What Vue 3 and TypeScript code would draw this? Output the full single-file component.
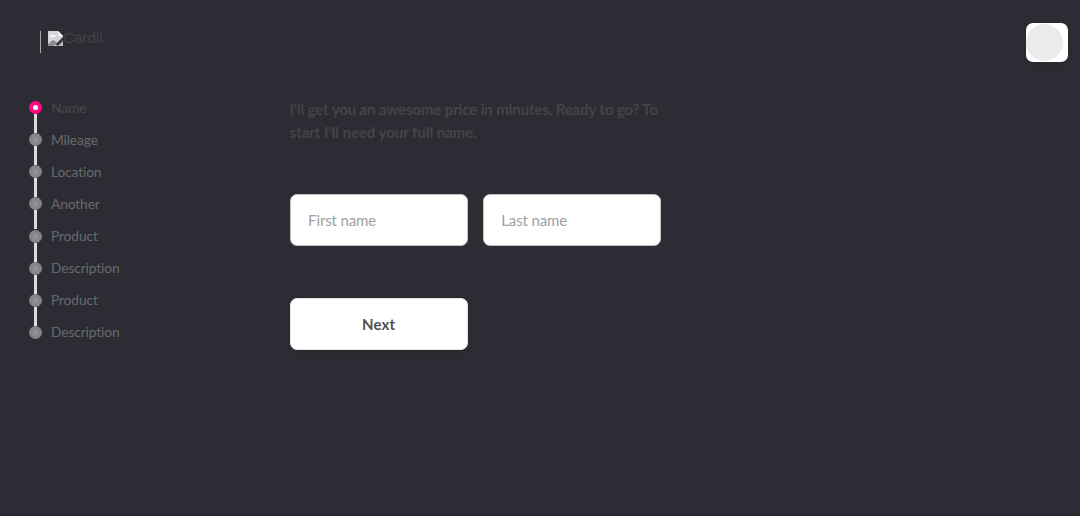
<script setup lang="ts">
import { ref } from 'vue'

const steps: string[] = ['Name', 'Mileage', 'Location', 'Another', 'Product', 'Description', 'Product', 'Description']
const current = ref(0)
const firstName = ref('')
const lastName = ref('')

function next(): void {
  if (current.value < steps.length - 1) current.value++
}
</script>

<template>
  <div class="page">
    <header class="header">
      <div class="brand">
        <span class="divider"></span>
        <svg class="broken" width="15" height="15" viewBox="0 0 15 15">
          <path d="M0 0H10L15 5V9L9 15H0Z" fill="#d5d6d9" />
          <path d="M10 0V5H15Z" fill="#f7f7f7" />
          <path d="M2 5Q3 3 5 4Q7 3 8 6H2Z" fill="#f6f7fa" />
          <path d="M0 13L5 9L9 11L6 15H0Z" fill="#8b8c8d" />
          <path d="M7 14L15 6V9L10 14Z" fill="#2c2c34" />
          <path d="M10 15L15 10V15Z" fill="#b9babd" />
        </svg>
        <span class="brand-name">Cardif</span>
      </div>
      <button class="menu" type="button" aria-label="Menu"><span class="avatar"></span></button>
    </header>
    <main class="main">
      <ol class="steps">
        <li v-for="(step, i) in steps" :key="i" class="step" :class="{ active: i === current }">
          <span class="marker"><span class="core"></span></span>
          <span class="label">{{ step }}</span>
        </li>
      </ol>
      <form class="form" @submit.prevent="next">
        <h1 class="title">
          <span class="line first">I'll get you an awesome price in minutes. Ready to go? To</span>
          <span class="line">start I'll need your full name.</span>
        </h1>
        <div class="fields">
          <input v-model="firstName" class="field" type="text" placeholder="First name" />
          <input v-model="lastName" class="field" type="text" placeholder="Last name" />
        </div>
        <button class="next" type="submit">Next</button>
      </form>
    </main>
  </div>
</template>

<style>
body {
  margin: 0;
  background: #2c2c34;
}
</style>

<style scoped>
.page {
  box-sizing: border-box;
  height: 516px;
  overflow: hidden;
  background: #2c2c34;
  border-bottom: 1px solid #25232c;
  font-family: Lato, sans-serif;
  font-variant-ligatures: none;
}
.header {
  display: flex;
  justify-content: space-between;
  align-items: flex-start;
  height: 91.5px;
  box-sizing: border-box;
  padding: 23px 12px 0 40px;
}
.brand {
  display: flex;
  align-items: flex-start;
  padding-top: 8px;
}
.divider {
  width: 1px;
  height: 22px;
  background: #a5a5aa;
  margin-right: 7px;
}
.broken {
  display: block;
}
.brand-name {
  margin-top: -1px;
  font: 15.3px/16px "Liberation Sans", Arial, sans-serif;
  letter-spacing: -0.1px;
  color: #424247;
  width: 39px;
  overflow: hidden;
  white-space: nowrap;
}
.menu {
  display: flex;
  align-items: center;
  width: 42.5px;
  height: 39px;
  padding: 0 0.5px;
  box-sizing: border-box;
  border: 0;
  border-radius: 7px;
  background: #fff;
  box-shadow: 0 2px 8px rgba(0, 0, 0, 0.08);
}
.avatar {
  width: 37px;
  height: 37px;
  border-radius: 50%;
  background: #eaeceb;
}
.main {
  display: flex;
}
.steps {
  width: 260.6px;
  margin: 0 0 0 29px;
  padding: 0;
  list-style: none;
}
.step {
  display: flex;
  align-items: center;
  gap: 9px;
  height: 32.14px;
  position: relative;
}
.step:not(:last-child)::after {
  content: "";
  position: absolute;
  left: 5px;
  top: 22.5px;
  width: 3px;
  height: 19px;
  background: #dcdcde;
}
.marker {
  display: flex;
  align-items: center;
  justify-content: center;
  width: 13px;
  height: 13px;
  border-radius: 50%;
  background: #858588;
}
.core {
  width: 5px;
  height: 5px;
  border-radius: 50%;
  background: #929295;
}
.label {
  font-size: 13.8px;
  line-height: 20px;
  letter-spacing: -0.14px;
  color: #69696d;
}
.active .marker {
  background: #ff0a83;
}
.active .core {
  background: #fff;
}
.active .label {
  color: #49494d;
}
.form {
  width: 372px;
  padding-top: 6.5px;
}
.title {
  margin: 0;
  height: 96px;
  font-size: 15px;
  line-height: 22.5px;
  font-weight: 700;
  white-space: nowrap;
  color: #444448;
}
.line {
  display: block;
  letter-spacing: -0.04px;
}
.first {
  letter-spacing: -0.13px;
}
.fields {
  display: flex;
  gap: 15px;
}
.field {
  box-sizing: border-box;
  width: 178.2px;
  height: 52px;
  padding: 0 17.5px;
  border: 1px solid #c4c4c8;
  border-radius: 7px;
  outline: 0;
  background: #fff;
  font: 15px Lato, sans-serif;
  letter-spacing: -0.13px;
  color: #444;
}
.field::placeholder {
  color: #a0a1a1;
  opacity: 1;
}
.next {
  display: block;
  width: 178.2px;
  height: 52px;
  margin-top: 52px;
  padding: 0;
  border: 1px solid #e4e4e6;
  border-radius: 7px;
  background: #fff;
  box-shadow: 0 2px 8px rgba(0, 0, 0, 0.08);
  font: 700 15px Lato, sans-serif;
  letter-spacing: 0.2px;
  color: #505050;
}
</style>
